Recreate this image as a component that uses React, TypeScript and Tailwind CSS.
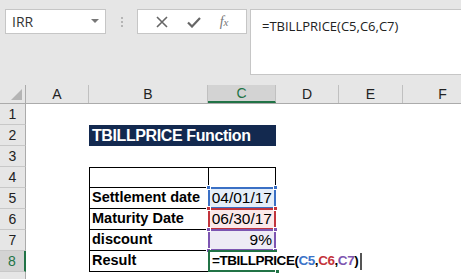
import React from "react";

const cols = [
  { key: "A", w: "w-[63px]" },
  { key: "B", w: "w-[119px]" },
  { key: "C", w: "w-[68px]" },
  { key: "D", w: "w-[63px]" },
  { key: "E", w: "w-[64px]" },
  { key: "F", w: "w-[80px]" },
];

function RangeBox({ border, fill, active = false }: { border: string; fill: string; active?: boolean }) {
  const sq = `absolute w-[5px] h-[5px] border border-white ${fill}`;
  return (
    <div
      className={`pointer-events-none absolute -left-[1px] -top-[1px] -right-[1px] -bottom-[1px] border-2 ${border} ${
        active ? "border-r-0" : ""
      }`}
    >
      {!active && (
        <>
          <div className={`${sq} -left-[4px] -top-[4px]`} />
          <div className={`${sq} -right-[4px] -top-[4px]`} />
          <div className={`${sq} -left-[4px] -bottom-[4px]`} />
        </>
      )}
      <div className={`${sq} ${active ? "-right-[3px]" : "-right-[4px]"} -bottom-[4px]`} />
    </div>
  );
}

const labels: Record<number, string> = {
  4: "",
  5: "Settlement date",
  6: "Maturity Date",
  7: "discount",
  8: "Result",
};

const cellBg: Record<number, string> = {
  4: "bg-white",
  5: "bg-[#e5eef9]",
  6: "bg-[#fbe9e9]",
  7: "bg-[#eeebf5]",
  8: "bg-white",
};

function RowCells({ r }: { r: number }) {
  if (r === 2) {
    return (
      <>
        <div className="w-[63px] shrink-0" />
        <div className="w-[187px] shrink-0 h-full bg-[#13294f] flex items-center pl-[3px]">
          <span className="text-white font-bold text-[16px] tracking-[-0.4px]">TBILLPRICE Function</span>
        </div>
      </>
    );
  }
  if (r < 4 || r > 8) return null;
  const top = r === 4 ? "border-t" : "";
  const right = r === 8 ? "" : "border-r";
  return (
    <>
      <div className="w-[63px] shrink-0" />
      <div className={`w-[119px] shrink-0 h-full border-l border-b border-black flex items-center pl-[2px] ${top}`}>
        <span className="font-bold text-[14.5px] text-black">{labels[r]}</span>
      </div>
      <div
        className={`w-[68px] shrink-0 h-full relative border-l border-b border-black flex items-center ${right} ${top} ${cellBg[r]}`}
      >
        {r === 5 && <span className="ml-auto pr-[3px] text-[15.5px] text-black">04/01/17</span>}
        {r === 6 && <span className="ml-auto pr-[3px] text-[15.5px] text-black">06/30/17</span>}
        {r === 7 && <span className="ml-auto pr-[3px] text-[15.5px] text-black">9%</span>}
        {r === 5 && <RangeBox border="border-[#3a70c5]" fill="bg-[#3a70c5]" />}
        {r === 6 && <RangeBox border="border-[#c2343c]" fill="bg-[#c2343c]" />}
        {r === 7 && <RangeBox border="border-[#7c55b1]" fill="bg-[#7c55b1]" />}
        {r === 8 && <RangeBox border="border-[#217346]" fill="bg-[#217346]" active />}
        {r === 8 && (
          <span className="absolute z-10 left-[3px] whitespace-nowrap font-bold text-[13.5px] tracking-[-0.45px] text-black flex items-center">
            =TBILLPRICE(<span className="text-[#3b73c8]">C5</span>,<span className="text-[#c4343b]">C6</span>,
            <span className="text-[#7d55b0]">C7</span>)
            <span className="ml-[2px] inline-block w-[2px] h-[17px] bg-[#555]" />
          </span>
        )}
      </div>
    </>
  );
}

export default function App() {
  const rows = [1, 2, 3, 4, 5, 6, 7, 8, 9];

  return (
    <div className="w-[461px] h-[279px] overflow-hidden bg-white flex flex-col font-['Liberation_Sans',Arial,sans-serif]">
      {/* toolbar + formula bar */}
      <div className="h-[85px] shrink-0 bg-[#e6e6e6] flex items-start pt-[9px] pl-[5px]">
        <div className="w-[101px] h-[25px] bg-white border border-[#c6c6c6] flex items-center px-[6px]">
          <span className="text-[14px] text-[#333] font-['Open_Sans',sans-serif]">IRR</span>
          <svg className="ml-auto" width="8" height="5" viewBox="0 0 8 5">
            <path d="M0 0h8L4 4z" fill="#777" />
          </svg>
        </div>
        <div className="w-[31px] h-[25px] flex flex-col items-center justify-center gap-[2px]">
          <div className="w-[2px] h-[2px] bg-[#b5b5b5]" />
          <div className="w-[2px] h-[2px] bg-[#b5b5b5]" />
          <div className="w-[2px] h-[2px] bg-[#b5b5b5]" />
        </div>
        <div className="w-[110px] h-[25px] bg-white border border-[#c6c6c6] flex items-center justify-around px-[8px]">
          <svg width="12" height="12" viewBox="0 0 12 12">
            <path d="M1 1l10 10M11 1L1 11" stroke="#666" strokeWidth="1.6" />
          </svg>
          <svg width="14" height="12" viewBox="0 0 14 12">
            <path d="M1 6.5l4 4L13 2" stroke="#666" strokeWidth="2.2" fill="none" />
          </svg>
          <span className="text-[14px] italic text-[#777] font-['Liberation_Serif',serif]">
            f<span className="text-[11px]">x</span>
          </span>
        </div>
        <div className="ml-[3px] flex-1 h-[66px] bg-white border border-[#c6c6c6] -mr-[2px] pl-[11px] pt-[4px]">
          <span className="text-[13px] text-[#222] font-['Open_Sans',sans-serif]">=TBILLPRICE(C5,C6,C7)</span>
        </div>
      </div>

      {/* column headers */}
      <div className="h-[19px] shrink-0 flex bg-[#e6e6e6] border-b border-[#ababab]">
        <div className="w-[26px] shrink-0 h-full border-r border-[#ababab] relative">
          <svg className="absolute right-[3px] bottom-[3px]" width="11" height="11" viewBox="0 0 11 11">
            <path d="M11 0V11H0z" fill="#b4b4b4" />
          </svg>
        </div>
        {cols.map((c) => (
          <div
            key={c.key}
            className={`${c.w} shrink-0 h-full flex items-center justify-center text-[14px] border-r border-[#c0c0c0] ${
              c.key === "C" ? "bg-[#d3d3d3] text-[#217346] border-b-2 border-b-[#217346]" : "text-[#222]"
            }`}
          >
            {c.key}
          </div>
        ))}
      </div>

      {/* rows */}
      {rows.map((r) => (
        <div key={r} className="h-[21px] shrink-0 flex">
          <div
            className={`w-[26px] shrink-0 h-full flex items-center justify-center text-[14px] border-b border-[#c8c8c8] ${
              r === 8
                ? "bg-[#d3d3d3] text-[#217346] border-r-2 border-r-[#217346]"
                : "bg-[#e6e6e6] text-[#222] border-r border-r-[#ababab]"
            }`}
          >
            {r < 9 ? r : ""}
          </div>
          <RowCells r={r} />
        </div>
      ))}
    </div>
  );
}
